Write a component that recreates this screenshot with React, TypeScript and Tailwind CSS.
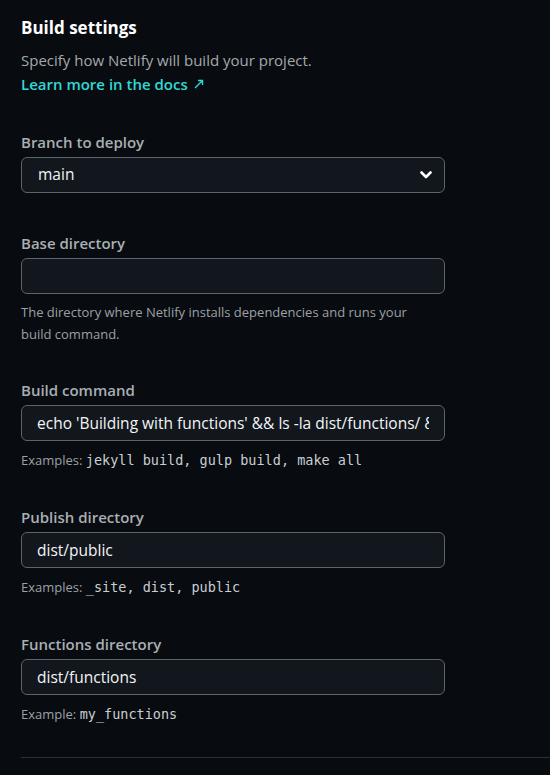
import React from "react";

const sans = { fontFamily: '"Open Sans", "Noto Sans", sans-serif' };

function Chevron() {
  return (
    <svg width="12" height="8" viewBox="0 0 12 8" className="shrink-0">
      <path d="M1.5 1.5 L6 6 L10.5 1.5" fill="none" stroke="#ffffff" strokeWidth="2.6" strokeLinecap="round" strokeLinejoin="round" />
    </svg>
  );
}

function Label({ children }: { children: React.ReactNode }) {
  return <div className="text-[15px] leading-6 font-semibold text-[#a9afb4]">{children}</div>;
}

function TextInput({ value }: { value: string }) {
  return (
    <input
      readOnly
      value={value}
      className="mt-[3px] block w-[424px] h-9 rounded-md border border-[#5e646c] bg-[#12171e] px-[15px] text-[15.5px] text-[#f3f4f5] outline-none"
      style={sans}
    />
  );
}

function Code({ children }: { children: React.ReactNode }) {
  return (
    <span className="text-[13.5px] text-[#c9ced2]" style={{ fontFamily: '"DejaVu Sans Mono", "Liberation Mono", monospace' }}>
      {children}
    </span>
  );
}

export default function App() {
  return (
    <div className="min-h-[775px] w-[550px] overflow-hidden bg-[#080b0f] pt-4" style={sans}>
      <div className="pl-[21px]">
        <h2 className="text-[17px] leading-6 font-bold text-white">Build settings</h2>
        <p className="mt-2 text-[15px] leading-6 text-[#a3a9ae]">Specify how Netlify will build your project.</p>
        <a className="flex items-center gap-[6px] text-[15px] leading-6 font-semibold text-[#30d9d4]">
          Learn more in the docs
          <svg width="10" height="10" viewBox="0 0 10 10">
            <path d="M1 9 L8.5 1.5 M4 1.5 L8.5 1.5 L8.5 6" fill="none" stroke="#30d9d4" strokeWidth="1.4" />
          </svg>
        </a>

        <div className="mt-[34px]">
          <Label>Branch to deploy</Label>
          <div className="mt-[3px] flex h-9 w-[424px] items-center justify-between rounded-md border border-[#5e646c] bg-[#12171e] pl-4 pr-3 text-[15.5px] text-[#f3f4f5]">
            <span>main</span>
            <Chevron />
          </div>
        </div>

        <div className="mt-[38px]">
          <Label>Base directory</Label>
          <TextInput value="" />
          <p className="mt-[7px] w-[410px] text-[13px] leading-[22px] text-[#9ba1a6]">
            The directory where Netlify installs dependencies and runs your build command.
          </p>
        </div>

        <div className="mt-[33px]">
          <Label>Build command</Label>
          <TextInput value="echo 'Building with functions' && ls -la dist/functions/ && echo 'done'" />
          <p className="mt-2 text-[13px] leading-[22px] text-[#9ba1a6]">
            Examples: <Code>jekyll build, gulp build, make all</Code>
          </p>
        </div>

        <div className="mt-[34px]">
          <Label>Publish directory</Label>
          <TextInput value="dist/public" />
          <p className="mt-2 text-[13px] leading-[22px] text-[#9ba1a6]">
            Examples: <Code>_site, dist, public</Code>
          </p>
        </div>

        <div className="mt-[34px]">
          <Label>Functions directory</Label>
          <TextInput value="dist/functions" />
          <p className="mt-2 text-[13px] leading-[22px] text-[#9ba1a6]">
            Example: <Code>my_functions</Code>
          </p>
        </div>

        <div className="mt-[32px] h-px bg-[#2b3036]" />
      </div>
    </div>
  );
}
